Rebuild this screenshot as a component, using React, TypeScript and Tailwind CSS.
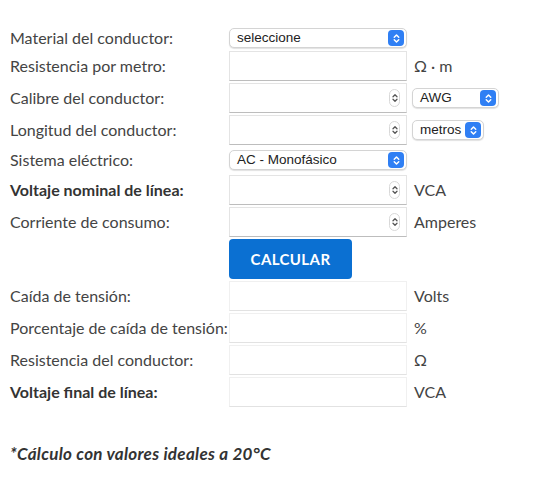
import React from 'react';

const font = { fontFamily: 'Lato, "Open Sans", sans-serif' };

const Chevrons = ({ className = '' }: { className?: string }) => (
	<svg viewBox="0 0 10 14" className={className} fill="none" strokeWidth="1.6" strokeLinecap="round" strokeLinejoin="round">
		<path d="M2.5 5.5 5 3l2.5 2.5" />
		<path d="M2.5 8.5 5 11l2.5-2.5" />
	</svg>
);

const Select = ({ value, width }: { value: string; width: string }) => (
	<div
		className={`flex h-[20px] items-center justify-between rounded-[5px] border border-[#d4d4d4] bg-white pl-[7px] pr-[2px] shadow-[0_1px_1px_rgba(0,0,0,0.12)] ${width}`}
	>
		<span className="text-[13.5px] text-[#222]" style={{ fontFamily: '"Liberation Sans", Arial, sans-serif' }}>
			{value}
		</span>
		<span className="flex h-[16px] w-[16px] items-center justify-center rounded-[4px] bg-[#2f7ff4]">
			<Chevrons className="h-[13px] w-[9px] stroke-white" />
		</span>
	</div>
);

const Field = ({ spinner = false, output = false }: { spinner?: boolean; output?: boolean }) => (
	<div
		className={`flex h-[30px] w-[178px] items-center justify-end bg-white pr-[6px] border ${
			output ? 'border-[#f0f0f0] border-b-[#e2e2e2]' : 'border-[#e4e4e4] border-b-[#bdbdbd]'
		}`}
	>
		{spinner && (
			<span className="flex h-[18px] w-[11px] items-center justify-center rounded-full border border-[#d8d8d8]">
				<Chevrons className="h-[14px] w-[8px] stroke-[#555]" />
			</span>
		)}
	</div>
);

const Row = ({
	label,
	bold = false,
	children,
	unit,
	h = 'h-[32px]',
}: {
	label: string;
	bold?: boolean;
	children: React.ReactNode;
	unit?: React.ReactNode;
	h?: string;
}) => (
	<div className={`flex items-center ${h}`}>
		<div className={`w-[219px] whitespace-nowrap text-[16px] ${bold ? 'font-bold text-[#333]' : 'text-[#444]'}`}>
			{label}
		</div>
		<div className="flex items-center gap-[5px]">
			{children}
			{unit && <div className="pl-[2px] text-[16px] text-[#444]">{unit}</div>}
		</div>
	</div>
);

export default function App() {
	return (
		<div className="min-h-[477px] w-[552px] bg-white pl-[10px] pt-[26px]" style={font}>
			<Row label="Material del conductor:" h="h-[24px]">
				<Select value="seleccione" width="w-[178px]" />
			</Row>
			<Row label="Resistencia por metro:" unit="Ω · m">
				<Field />
			</Row>
			<Row label="Calibre del conductor:">
				<Field spinner />
				<Select value="AWG" width="w-[87px]" />
			</Row>
			<Row label="Longitud del conductor:">
				<Field spinner />
				<Select value="metros" width="w-[72px]" />
			</Row>
			<Row label="Sistema eléctrico:" h="h-[28px]">
				<Select value="AC - Monofásico" width="w-[178px]" />
			</Row>
			<Row label="Voltaje nominal de línea:" bold unit="VCA">
				<Field spinner />
			</Row>
			<Row label="Corriente de consumo:" unit="Amperes">
				<Field spinner />
			</Row>
			<div className="flex h-[42px] items-center pl-[219px]">
				<button className="h-[40px] w-[123px] rounded-[4px] bg-[#0b70d2] text-[15px] font-bold tracking-[0.4px] text-white">
					CALCULAR
				</button>
			</div>
			<Row label="Caída de tensión:" unit="Volts">
				<Field output />
			</Row>
			<Row label="Porcentaje de caída de tensión:" unit="%">
				<Field output />
			</Row>
			<Row label="Resistencia del conductor:" unit="Ω">
				<Field output />
			</Row>
			<Row label="Voltaje final de línea:" bold unit="VCA">
				<Field output />
			</Row>
			<p className="mt-[33px] text-[17px] font-bold italic tracking-[0.3px] text-[#333]">
				*Cálculo con valores ideales a 20°C
			</p>
		</div>
	);
}
